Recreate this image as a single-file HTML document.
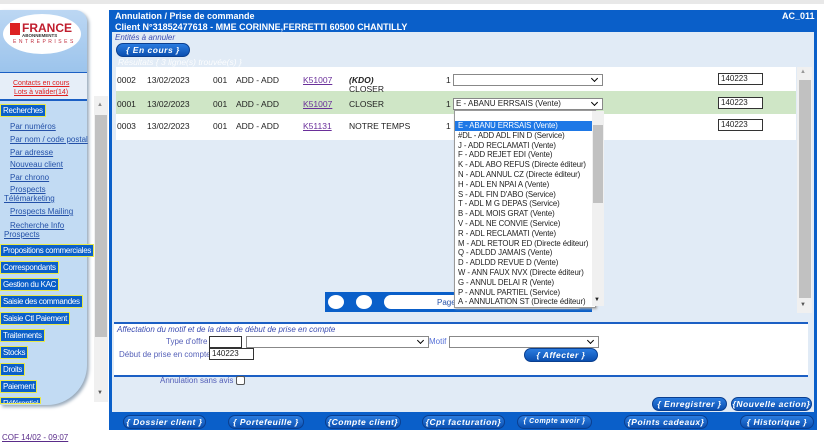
<!DOCTYPE html><html><head><meta charset="utf-8"><style>
body{margin:0;width:824px;height:447px;position:relative;overflow:hidden;background:#fff;font-family:"Liberation Sans",sans-serif;font-size:8.5px;color:#222}
.a{position:absolute}
.btn{position:absolute;height:12px;border-radius:7px;background:linear-gradient(#2a7ce0,#0b4fb0);color:#fff;font-style:italic;font-weight:bold;font-size:8.5px;text-align:center;line-height:12px;letter-spacing:.5px;border:1px solid #0a3f90;white-space:nowrap}
.menu{position:absolute;left:0;background:#0a5fc9;color:#fff;font-size:8px;padding:1px 2px;border:1px solid #e8e84a;letter-spacing:-.3px;white-space:nowrap}
.lk{position:absolute;color:#2451a8;text-decoration:underline;font-size:8px;white-space:nowrap}
.sel{position:absolute;background:#fff;border:1px solid #888;height:10px;white-space:nowrap}
.sel:after{content:"";position:absolute;right:5px;top:1px;width:4px;height:4px;border-right:1.5px solid #000;border-bottom:1.5px solid #000;transform:rotate(45deg)}
.inp{position:absolute;background:#fff;border:1px solid #333;height:10px;font-size:8px;line-height:10px;padding-left:2px}
.dd div{height:9.8px;line-height:9.8px;padding-left:3px;font-size:7.8px;white-space:nowrap;letter-spacing:-.1px}
</style></head><body>
<div class="a" style="left:0;top:0;width:824px;height:4px;background:#e8e8e8"></div>
<div class="a" style="left:0;top:10px;width:87px;height:395px;background:#c2dbf3;border-radius:0 12px 40px 0;box-shadow:2px 2px 3px #9ab"></div>
<div class="a" style="left:0;top:10px;width:87px;height:62px;background:linear-gradient(#bcd7f3,#9cc4ec);border-radius:0 12px 0 0"></div>
<div class="a" style="left:3px;top:14px;width:78px;height:40px;background:#fff;border-radius:50%"></div>
<div class="a" style="left:10px;top:23px;width:10px;height:12px;background:#d22"></div>
<div class="a" style="left:22px;top:21px;color:#c01e2e;font-weight:bold;font-size:12px">FRANCE</div>
<div class="a" style="left:22px;top:33px;color:#333;font-weight:bold;font-size:4.5px">ABONNEMENTS</div>
<div class="a" style="left:13px;top:39px;color:#c03040;font-size:5px;letter-spacing:2.5px">ENTREPRISES</div>
<div class="a" style="left:0;top:72px;width:87px;height:26px;background:#e6eef8;border-top:1px solid #1b5fc4;border-bottom:2px solid #1b5fc4"></div>
<div class="a" style="left:13px;top:80px;color:#e02020;text-decoration:underline;font-size:7px">Contacts en cours</div>
<div class="a" style="left:14px;top:89px;color:#e02020;text-decoration:underline;font-size:7px">Lots à valider(14)</div>
<div class="menu" style="top:104px">Recherches</div>
<div class="lk" style="left:10px;top:122px">Par numéros</div>
<div class="lk" style="left:10px;top:135px">Par nom / code postal</div>
<div class="lk" style="left:10px;top:148px">Par adresse</div>
<div class="lk" style="left:10px;top:160px">Nouveau client</div>
<div class="lk" style="left:10px;top:173px">Par chrono</div>
<div class="lk" style="left:10px;top:185px">Prospects</div>
<div class="lk" style="left:4px;top:194px">Télémarketing</div>
<div class="lk" style="left:10px;top:207px">Prospects Mailing</div>
<div class="lk" style="left:10px;top:221px">Recherche Info</div>
<div class="lk" style="left:4px;top:230px">Prospects</div>
<div class="menu" style="top:244px">Propositions commerciales</div>
<div class="menu" style="top:261px">Correspondants</div>
<div class="menu" style="top:278px">Gestion du KAC</div>
<div class="menu" style="top:295px">Saisie des commandes</div>
<div class="menu" style="top:312px">Saisie Ctl Paiement</div>
<div class="menu" style="top:329px">Traitements</div>
<div class="menu" style="top:346px">Stocks</div>
<div class="menu" style="top:363px">Droits</div>
<div class="menu" style="top:380px">Paiement</div>
<div class="menu" style="top:397px;height:3px;overflow:hidden">Référentiel</div>
<div class="a" style="left:94px;top:96px;width:14px;height:306px;background:#f0f0f0"></div>
<div class="a" style="left:95px;top:115px;width:12px;height:222px;background:#c1c1c1"></div>
<div class="a" style="left:97px;top:102px;font-size:6px;color:#888">▲</div>
<div class="a" style="left:97px;top:390px;font-size:6px;color:#555">▼</div>
<div class="a" style="left:2px;top:433px;color:#5a2c8a;text-decoration:underline;font-size:8px">COF 14/02 - 09:07</div>
<div class="a" style="left:109px;top:10px;width:702px;height:420px;background:#e1ebf6;border:3px solid #0a5fc9;border-top:0;border-bottom:0"></div>
<div class="a" style="left:109px;top:10px;width:708px;height:22px;background:#0a5fc9"></div>
<div class="a" style="left:115px;top:11px;color:#fff;font-weight:bold;font-size:9px">Annulation / Prise de commande</div>
<div class="a" style="left:115px;top:22px;color:#fff;font-weight:bold;font-size:9px">Client N°31852477618 - MME CORINNE,FERRETTI 60500 CHANTILLY</div>
<div class="a" style="left:782px;top:11px;color:#fff;font-weight:bold;font-size:9px">AC_011</div>
<div class="a" style="left:115px;top:33px;color:#3a4bb0;font-style:italic;font-size:8px">Entités à annuler</div>
<div class="btn" style="left:116px;top:43px;width:72px">{ En cours }</div>
<div class="a" style="left:118px;top:57px;color:#fff;font-style:italic;font-size:8.5px;opacity:.9">Résultats { 3 ligne(s) trouvée(s) }</div>
<div class="a" style="left:116px;top:67px;width:680px;height:73px;background:#fff"></div>
<div class="a" style="left:116px;top:91px;width:680px;height:23px;background:#cfe6c6"></div>
<div class="a" style="left:117px;top:75px">0002</div><div class="a" style="left:147px;top:75px">13/02/2023</div><div class="a" style="left:213px;top:75px">001</div><div class="a" style="left:236px;top:75px">ADD - ADD</div><div class="a" style="left:303px;top:75px;color:#6a2f9a;text-decoration:underline">K51007</div><div class="a" style="left:349px;top:75px;font-weight:bold;font-style:italic">(KDO)</div><div class="a" style="left:349px;top:84px">CLOSER</div>
<div class="a" style="left:117px;top:99px">0001</div><div class="a" style="left:147px;top:99px">13/02/2023</div><div class="a" style="left:213px;top:99px">001</div><div class="a" style="left:236px;top:99px">ADD - ADD</div><div class="a" style="left:303px;top:99px;color:#6a2f9a;text-decoration:underline">K51007</div><div class="a" style="left:349px;top:99px">CLOSER</div>
<div class="a" style="left:117px;top:121px">0003</div><div class="a" style="left:147px;top:121px">13/02/2023</div><div class="a" style="left:213px;top:121px">001</div><div class="a" style="left:236px;top:121px">ADD - ADD</div><div class="a" style="left:303px;top:121px;color:#6a2f9a;text-decoration:underline">K51131</div><div class="a" style="left:349px;top:121px">NOTRE TEMPS</div>
<div class="a" style="left:446px;top:75px">1</div><div class="a" style="left:446px;top:99px">1</div><div class="a" style="left:446px;top:121px">1</div>
<div class="sel" style="left:453px;top:74px;width:148px"></div>
<div class="sel" style="left:453px;top:98px;font-size:8px;line-height:10px;padding-left:2px;width:146px">E - ABANU ERRSAIS (Vente)</div>
<div class="inp" style="left:718px;top:73px;width:41px">140223</div>
<div class="inp" style="left:718px;top:97px;width:41px">140223</div>
<div class="inp" style="left:718px;top:119px;width:41px">140223</div>
<div class="a" style="left:797px;top:67px;width:15px;height:246px;background:#f0f0f0"></div>
<div class="a" style="left:799px;top:80px;width:12px;height:218px;background:#c1c1c1"></div>
<div class="a" style="left:800px;top:69px;font-size:6px;color:#999">▲</div>
<div class="a" style="left:800px;top:302px;font-size:6px;color:#555">▼</div>
<div class="a" style="left:325px;top:292px;width:267px;height:20px;background:#0a5fc9"></div>
<div class="a" style="left:328px;top:295px;width:16px;height:14px;background:#fff;border-radius:50%"></div>
<div class="a" style="left:356px;top:295px;width:16px;height:14px;background:#fff;border-radius:50%"></div>
<div class="a" style="left:384px;top:295px;width:200px;height:14px;background:#fff;border-radius:7px"></div>
<div class="a" style="left:437px;top:298px;color:#2451a8;font-size:8px">Page</div>
<div class="a dd" style="left:454px;top:110px;width:140px;height:196px;background:#fff;border:1px solid #999;box-shadow:1px 1px 2px #aaa;overflow:hidden">
<div style="height:10px"></div>
<div style="background:#1e78e6;color:#fff">E - ABANU ERRSAIS (Vente)</div>
<div>#DL - ADD ADL FIN D (Service)</div><div>J - ADD RECLAMATI (Vente)</div><div>F - ADD REJET EDI (Vente)</div><div>K - ADL ABO REFUS (Directe éditeur)</div><div>N - ADL ANNUL CZ (Directe éditeur)</div><div>H - ADL EN NPAI A (Vente)</div><div>S - ADL FIN D'ABO (Service)</div><div>T - ADL M G DEPAS (Service)</div><div>B - ADL MOIS GRAT (Vente)</div><div>V - ADL NE CONVIE (Service)</div><div>R - ADL RECLAMATI (Vente)</div><div>M - ADL RETOUR ED (Directe éditeur)</div><div>Q - ADLDD JAMAIS (Vente)</div><div>D - ADLDD REVUE D (Vente)</div><div>W - ANN FAUX NVX (Directe éditeur)</div><div>G - ANNUL DELAI R (Vente)</div><div>P - ANNUL PARTIEL (Service)</div><div>A - ANNULATION ST (Directe éditeur)</div>
</div>
<div class="a" style="left:592px;top:111px;width:12px;height:195px;background:#f0f0f0"></div>
<div class="a" style="left:593px;top:125px;width:10px;height:78px;background:#c1c1c1"></div>
<div class="a" style="left:594px;top:297px;font-size:6px">▼</div>
<div class="a" style="left:114px;top:322px;width:694px;height:51px;background:#fff;border-top:2px solid #1b5fc4;border-bottom:2px solid #1b5fc4"></div>
<div class="a" style="left:117px;top:325px;color:#3a4bb0;font-style:italic;font-size:8px">Affectation du motif et de la date de début de prise en compte</div>
<div class="a" style="left:166px;top:337px;color:#5560b8;font-size:8px">Type d'offre :</div>
<div class="inp" style="left:209px;top:336px;width:29px"></div>
<div class="sel" style="left:246px;top:336px;width:181px"></div>
<div class="a" style="left:429px;top:337px;color:#5570d8;font-size:8px">Motif :</div>
<div class="sel" style="left:449px;top:336px;width:148px"></div>
<div class="a" style="left:119px;top:350px;color:#5560b8;font-size:8px">Début de prise en compte :</div>
<div class="inp" style="left:209px;top:348px;width:41px">140223</div>
<div class="btn" style="left:524px;top:348px;width:72px">{ Affecter }</div>
<div class="a" style="left:160px;top:376px;color:#5560b8;font-size:8px">Annulation sans avis :</div>
<div class="a" style="left:236px;top:376px;width:7px;height:7px;border:1px solid #555;background:#fff;border-radius:2px"></div>
<div class="btn" style="left:652px;top:397px;width:73px">{ Enregistrer }</div>
<div class="btn" style="left:731px;top:397px;width:79px">{Nouvelle action}</div>
<div class="a" style="left:109px;top:412px;width:708px;height:18px;background:#0a5fc9"></div>
<div class="btn" style="left:123px;top:415px;width:81px">{ Dossier client }</div>
<div class="btn" style="left:228px;top:415px;width:74px">{ Portefeuille }</div>
<div class="btn" style="left:325px;top:415px;width:74px">{Compte client}</div>
<div class="btn" style="left:422px;top:415px;width:81px">{Cpt facturation}</div>
<div class="btn" style="left:517px;top:415px;width:73px;font-size:7px">{ Compte avoir }</div>
<div class="btn" style="left:624px;top:415px;width:82px">{Points cadeaux}</div>
<div class="btn" style="left:740px;top:415px;width:72px">{ Historique }</div>
</body></html>
